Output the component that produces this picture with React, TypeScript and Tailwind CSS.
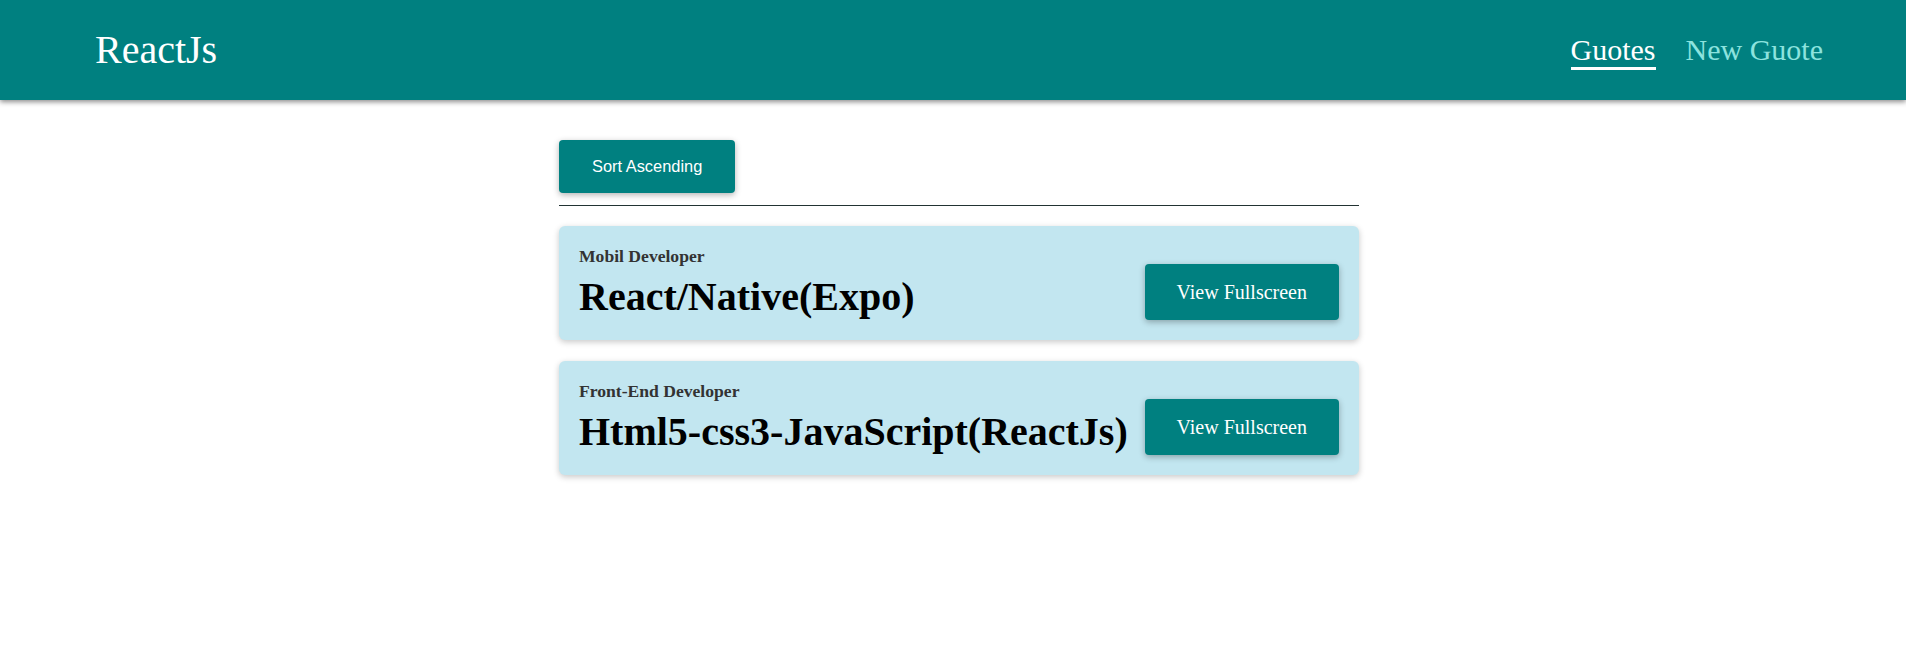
import React from "react";

const serif = "font-['Liberation_Serif',_'Times_New_Roman',_serif]";

function QuoteCard({ author, text }: { author: string; text: string }) {
  return (
    <div className="flex items-end justify-between rounded-[6px] bg-[#c2e6f0] p-[20px] shadow-[0_2px_6px_rgba(0,0,0,0.22)]">
      <div className="flex flex-col gap-[8px]">
        <p className="text-[17.6px] font-bold text-[#333333] leading-[20px]">{author}</p>
        <h2 className="text-[40px] font-bold text-black leading-[46px]">{text}</h2>
      </div>
      <button className="h-[56px] shrink-0 rounded-[4px] bg-[#008080] px-[32px] text-[20px] text-white shadow-[0_2px_6px_rgba(0,0,0,0.3)]">
        View Fullscreen
      </button>
    </div>
  );
}

export default function App() {
  return (
    <div className={`min-h-[671px] bg-white ${serif}`}>
      <header className="flex h-[100px] items-center justify-between bg-[#008080] pl-[95px] pr-[83px] shadow-[0_2px_5px_rgba(0,0,0,0.45)]">
        <div className="text-[40px] leading-[46px] text-white">ReactJs</div>
        <nav className="flex gap-[30px] pt-[5px]">
          <span className="border-b-[3px] border-white pb-[2px] text-[30px] leading-[30px] text-white">
            Guotes
          </span>
          <span className="border-b-[3px] border-transparent pb-[2px] text-[30px] leading-[30px] text-[#8ce3de]">
            New Guote
          </span>
        </nav>
      </header>
      <main className="ml-[559px] w-[800px] pt-[40px]">
        <button className="h-[53px] rounded-[4px] bg-[#008080] px-[33px] font-['Liberation_Sans',_Arial,_sans-serif] text-[16.4px] text-white shadow-[0_2px_6px_rgba(0,0,0,0.3)]">
          Sort Ascending
        </button>
        <div className="mt-[12px] h-px bg-[#223333]" />
        <div className="mt-[20px] flex flex-col gap-[21px]">
          <QuoteCard author="Mobil Developer" text="React/Native(Expo)" />
          <QuoteCard author="Front-End Developer" text="Html5-css3-JavaScript(ReactJs)" />
        </div>
      </main>
    </div>
  );
}
